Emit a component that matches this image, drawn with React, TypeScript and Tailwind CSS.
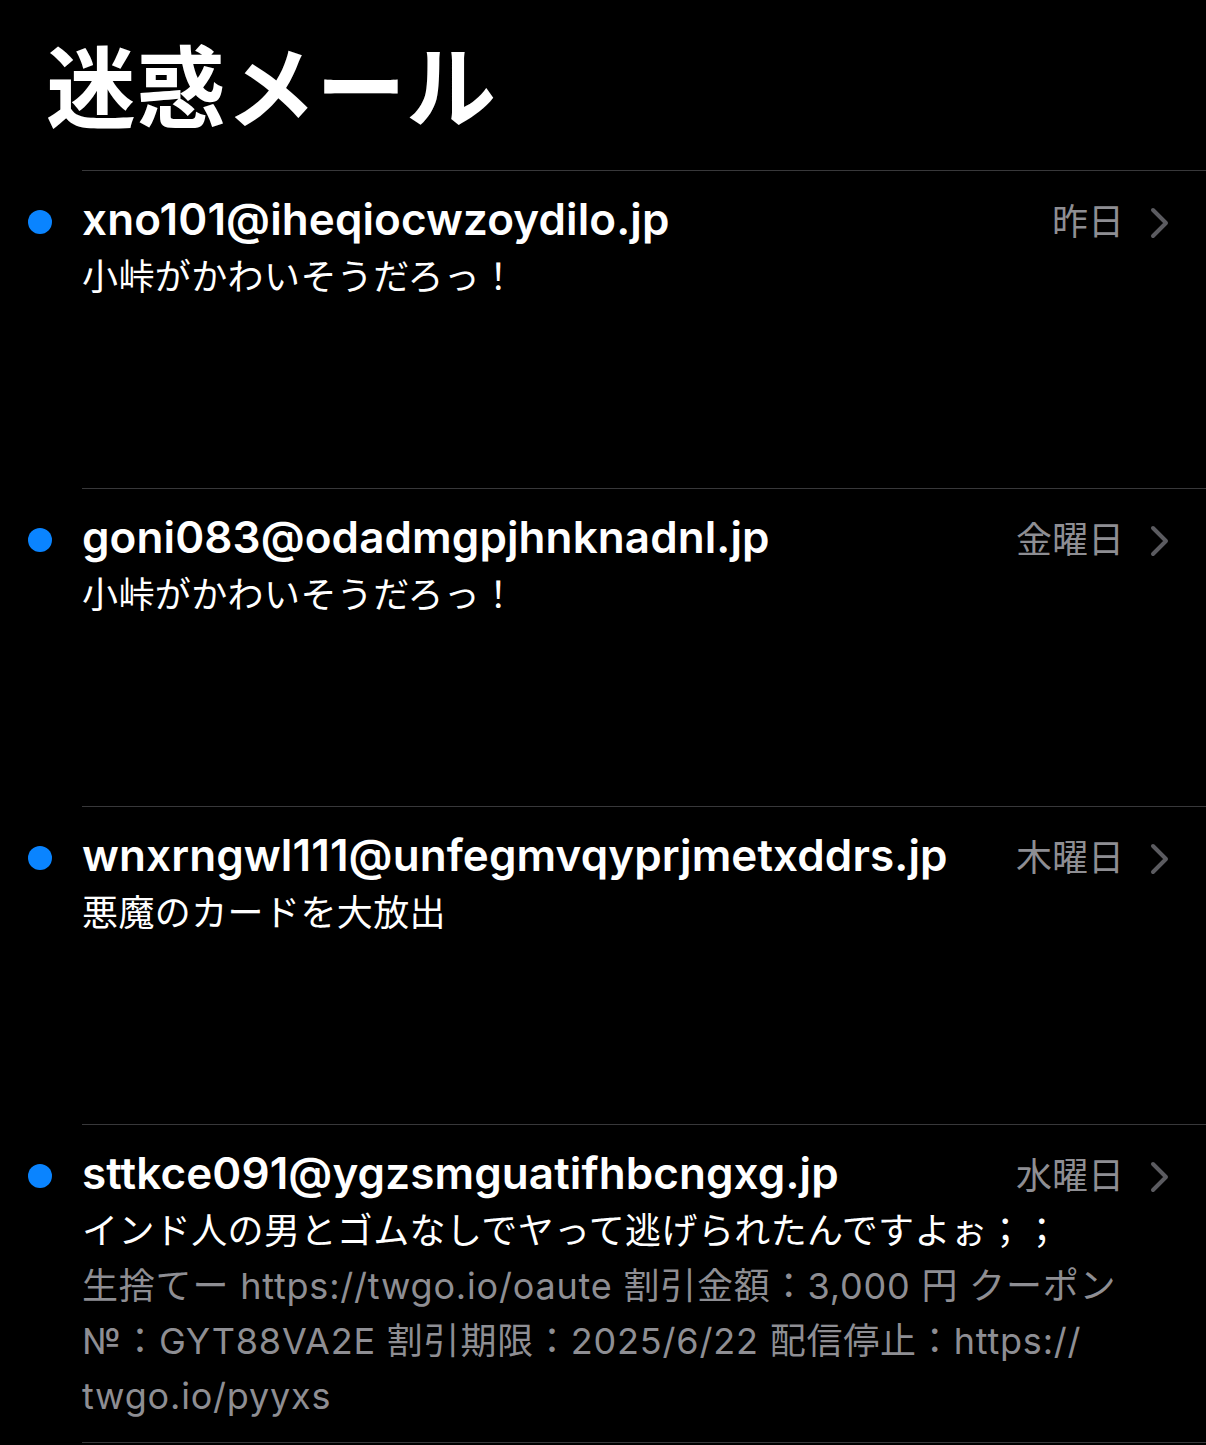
import React from "react";

const FONT = { fontFamily: 'Inter, "Noto Sans CJK JP", sans-serif' };

type Mail = {
  from: string;
  date: string;
  subject: string;
  preview?: string[];
};

const mails: Mail[] = [
  { from: "xno101@iheqiocwzoydilo.jp", date: "昨日", subject: "小峠がかわいそうだろっ！" },
  { from: "goni083@odadmgpjhnknadnl.jp", date: "金曜日", subject: "小峠がかわいそうだろっ！" },
  { from: "wnxrngwl111@unfegmvqyprjmetxddrs.jp", date: "木曜日", subject: "悪魔のカードを大放出" },
  {
    from: "sttkce091@ygzsmguatifhbcngxg.jp",
    date: "水曜日",
    subject: "インド人の男とゴムなしでヤって逃げられたんですよぉ；；",
    preview: [
      "生捨てー https://twgo.io/oaute 割引金額：3,000 円 クーポン",
      "№：GYT88VA2E 割引期限：2025/6/22 配信停止：https://",
      "twgo.io/pyyxs",
    ],
  },
];

function Chevron() {
  return (
    <svg width="20" height="32" viewBox="0 0 20 32" fill="none">
      <path d="M3 3 L16 16 L3 29" stroke="#5b5b60" strokeWidth="4" strokeLinecap="round" strokeLinejoin="round" />
    </svg>
  );
}

function Row({ m }: { m: Mail }) {
  return (
    <div className="flex h-[318px]">
      <div className="w-[82px] shrink-0 flex justify-center pt-[40px] pr-[2px]">
        <div className="w-[24px] h-[24px] rounded-full bg-[#0a84ff]" />
      </div>
      <div className="flex-1 border-t border-[#38383a] pt-[24px] pr-[36px]">
        <div className="flex items-center justify-between h-[55px]">
          <div className="text-[44px] font-semibold text-white leading-[55px] whitespace-nowrap tracking-[0.1px] -mt-[6px]">{m.from}</div>
          <div className="flex items-center gap-[26px]">
            <span className="text-[36px] text-[#8e8e93] leading-[55px]">{m.date}</span>
            <Chevron />
          </div>
        </div>
        <div className="text-[36px] leading-[55px] text-white whitespace-nowrap tracking-[0.4px]">{m.subject}</div>
        {m.preview && m.preview.map((l, i) => (
          <div key={i} className="text-[36px] leading-[55px] text-[#8e8e93] whitespace-nowrap tracking-[0.8px]">{l}</div>
        ))}
      </div>
    </div>
  );
}

export default function App() {
  return (
    <div className="bg-black min-h-[1445px] w-full overflow-hidden" style={FONT}>
      <div className="pl-[46px] pt-[44px] h-[170px]">
        <h1 className="text-[90px] font-bold text-white leading-none">迷惑メール</h1>
      </div>
      {mails.map((m, i) => (
        <Row key={i} m={m} />
      ))}
      <div className="ml-[82px] border-t border-[#38383a]" />
    </div>
  );
}
